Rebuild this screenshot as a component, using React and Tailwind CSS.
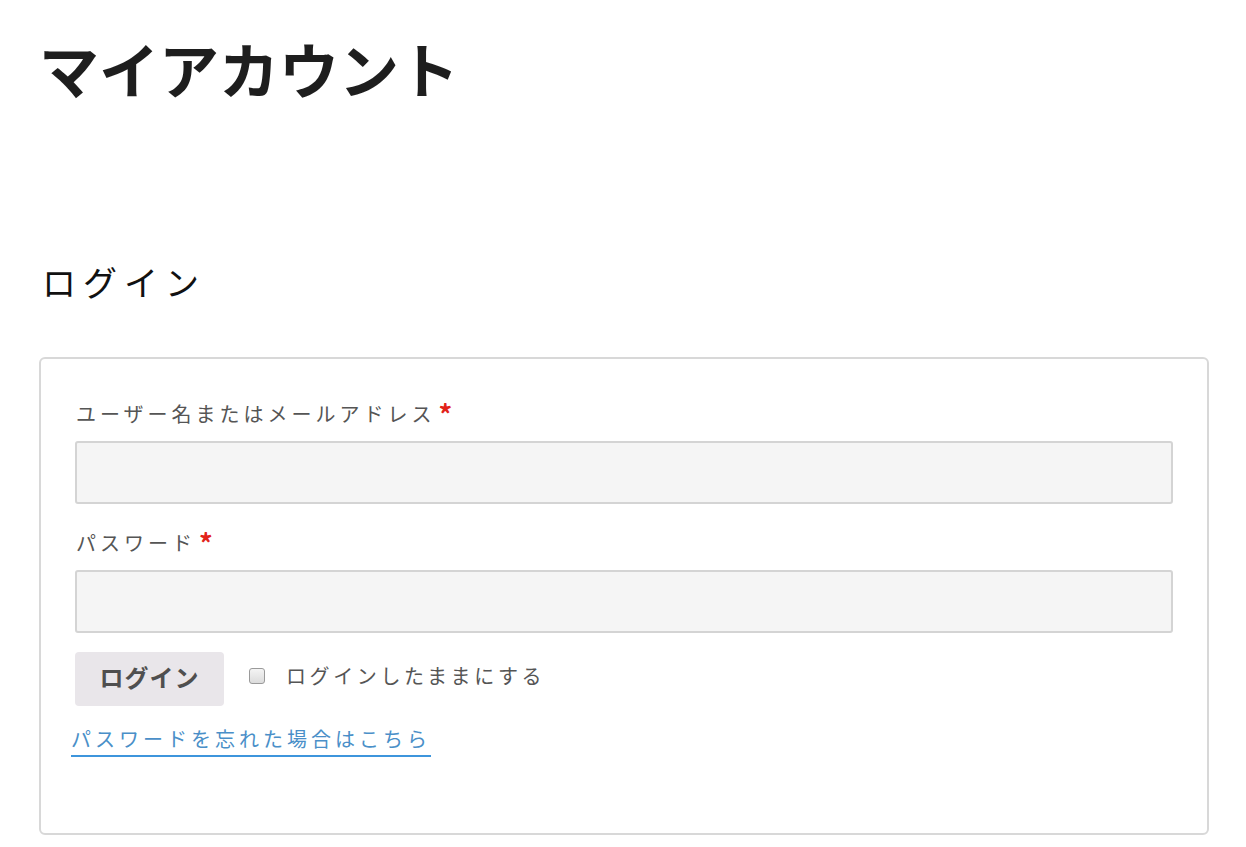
import React from "react";

const jp = { fontFamily: '"Noto Sans CJK JP", "Noto Sans", sans-serif' };

const Field = ({ label, type }) => (
  <div>
    <label className="flex items-center text-[20px] leading-[30px] tracking-[4px] text-[#555] pl-[1px]">
      {label}
      <span className="text-[#e2231a] font-bold text-[27px] leading-[30px] ml-[3px] tracking-normal">*</span>
    </label>
    <input
      type={type}
      className="block mt-[12px] w-full h-[63px] bg-[#f5f5f5] border-2 border-[#d4d4d4] rounded-[3px] outline-none"
    />
  </div>
);

export default function App() {
  return (
    <div className="bg-white min-h-screen pl-[39px] pr-[37px]" style={jp}>
      <h1 className="pt-[32px] text-[60px] leading-[72px] font-bold text-[#1e1e1e]">マイアカウント</h1>
      <h2 className="mt-[154px] text-[34px] leading-[48px] tracking-[7px] text-[#111] pl-[3px]">ログイン</h2>

      <div className="mt-[51px] border-2 border-[#d8d8d8] rounded-[6px] px-[34px] pt-[40px] pb-[76px]">
        <Field label="ユーザー名またはメールアドレス" type="text" />
        <div className="mt-[24px]">
          <Field label="パスワード" type="password" />
        </div>

        <div className="mt-[19px] flex items-center">
          <button className="h-[54px] w-[149px] pb-[4px] bg-[#e9e6ea] rounded-[4px] text-[24px] font-bold tracking-[1px] text-[#4f4f4f]">
            ログイン
          </button>
          <span className="ml-[25px] -mt-[6px] w-[16px] h-[16px] border border-[#9a9a9a] rounded-[3px] bg-gradient-to-b from-[#f4f4f4] to-[#dcdcdc]"></span>
          <span className="ml-[21px] -mt-[6px] text-[20px] leading-[30px] tracking-[3.6px] text-[#555]">ログインしたままにする</span>
        </div>

        <a
          href="#"
          className="inline-block mt-[19px] -ml-[4px] text-[20px] leading-[28px] tracking-[4px] text-[#4a8fc8] border-b-2 border-[#3d95dc] pb-[2px]"
        >
          パスワードを忘れた場合はこちら
        </a>
      </div>
    </div>
  );
}
